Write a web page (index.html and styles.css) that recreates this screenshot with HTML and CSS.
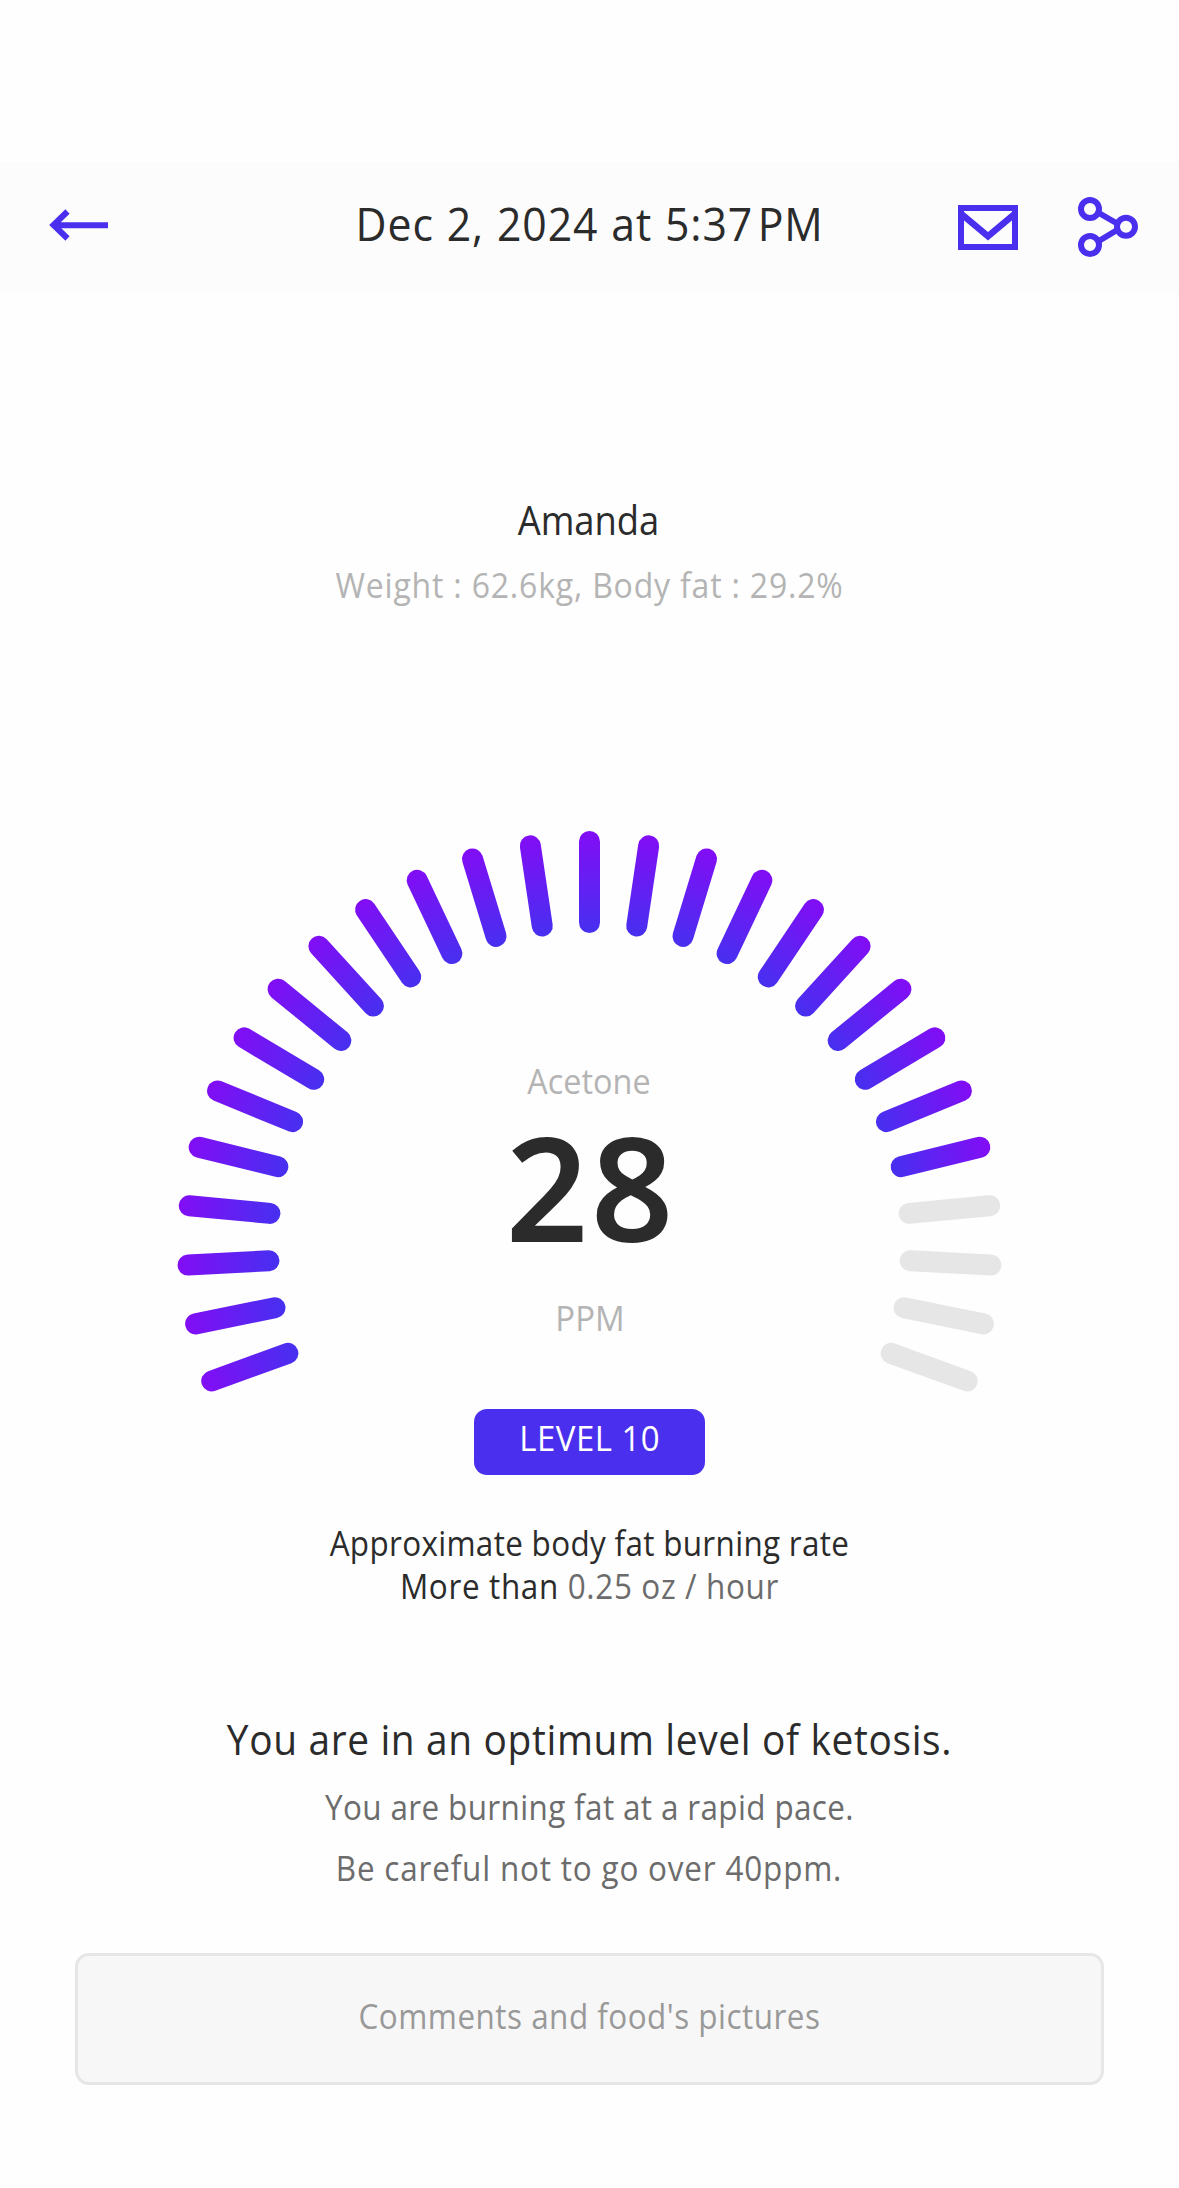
FILE: index.html
```html
<!DOCTYPE html>
<html lang="en">
<head>
<meta charset="utf-8">
<title>Ketone reading</title>
<link rel="stylesheet" href="styles.css">
</head>
<body>
<header class="bar">
  <svg class="icon-back" viewBox="0 0 60 32" aria-label="Back"><path d="M18.500 2.500 4.500 16 18.500 29.500M5 16.300H59"/></svg>
  <h1 class="title">Dec 2, 2024 at 5:37<span class="thin"> </span>PM</h1>
  <div class="actions">
    <svg class="icon-mail" viewBox="0 0 60 45" aria-label="Mail"><path d="M3 3H57V42H3Z"/><path class="flap" d="M4 9.500 30 31.200 56 9.500"/></svg>
    <svg class="icon-share" viewBox="0 0 60 60" aria-label="Share"><circle cx="12" cy="12" r="9"/><circle cx="12" cy="48" r="9"/><circle cx="48" cy="29.700" r="9"/><path d="M20 15.500 40 27M20 44.500 40 32.500"/></svg>
  </div>
</header>
<main class="content">
  <p class="name">Amanda</p>
  <p class="stats">Weight : 62.6kg, Body fat : 29.2%</p>
  <section class="gauge">
    <svg class="dial" viewBox="0 0 840 580">
      <defs>
        <linearGradient id="fill" x1="0" y1="0" x2="0" y2="1"><stop offset="0" stop-color="#820df5"/><stop offset="1" stop-color="#4730f0"/></linearGradient>
        <rect id="tick" x="409" y="11" width="21" height="102" rx="10.500"/>
      </defs>
      <g id="ticks"></g>
    </svg>
    <div class="reading">
      <p class="label">Acetone</p>
      <p class="value">28</p>
      <p class="unit">PPM</p>
    </div>
  </section>
  <div class="badge"><span class="badge-text">LEVEL 10</span></div>
  <div class="rate">
    <p class="rate-title">Approximate body fat burning rate</p>
    <p class="rate-value">More than <span class="muted">0.25 oz / hour</span></p>
  </div>
  <h2 class="headline">You are in an optimum level of ketosis.</h2>
  <div class="advice">
    <p class="pace">You are burning fat at a rapid pace.</p>
    <p class="caution">Be careful not to go over 40ppm.</p>
  </div>
  <div class="comments"><p class="placeholder">Comments and food's pictures</p></div>
</main>
<script src="gauge.js"></script>
</body>
</html>
```
FILE: styles.css
```css
* { box-sizing: border-box; }
body {
  margin: 0;
  padding-top: 162px;
  min-height: 2188px;
  background: #fefefe;
  color: #2b2b2b;
  font: 400 34px/40px "Open Sans", "Noto Sans", sans-serif;
}
p, h1, h2 { margin: 0; font-weight: 400; }
svg { display: block; fill: none; stroke: #4a30ee; stroke-width: 6; }

.bar {
  display: grid;
  grid-template-columns: 1fr auto 1fr;
  height: 131px;
  padding: 0 41px 0 49px;
  background: #fcfcfd;
}
.icon-back { width: 60px; height: 32px; margin-top: 47px; stroke-width: 6; }
.title {
  font-size: 46px;
  line-height: 122px;
  letter-spacing: .95px;
  word-spacing: 1px;
  white-space: nowrap;
  transform: translateX(-4px) scaleX(.93);
}
.thin { word-spacing: -8px; }
.actions { display: flex; justify-content: flex-end; gap: 60px; }
.icon-mail { width: 60px; height: 45px; margin-top: 43px; }
.flap { stroke-width: 6.500; }
.icon-share { width: 60px; height: 60px; margin-top: 35px; }

.content { text-align: center; white-space: nowrap; }
.name {
  margin-top: 197px;
  font-size: 39.5px;
  line-height: 60px;
  transform: translateX(-1px) scaleX(.921);
}
.stats {
  margin-top: 5px;
  line-height: 60px;
  color: #b4b4b4;
  letter-spacing: .87px;
  transform: scaleX(.94);
}

.gauge { display: grid; justify-content: center; margin-top: 205px; }
.dial, .reading { grid-area: 1 / 1; }
.dial { width: 840px; height: 580px; stroke: none; }
.lit { fill: url(#fill); }
.unlit { fill: #e6e6e6; }
.reading { padding-top: 241px; }
.label { color: #b4b4b4; transform: translateX(-1px) scaleX(.953); }
.value {
  margin: 15px -3px 0 0;
  font: 600 144px/140px "Noto Sans", sans-serif;
  letter-spacing: 2.9px;
}
.unit { margin-top: 42px; color: #b4b4b4; transform: scaleX(.97); }

.badge {
  width: 231.5px;
  height: 65.5px;
  margin: 9px auto 0;
  border-radius: 13px;
  background: #4a30ee;
  color: #fff;
}
.badge-text {
  display: block;
  line-height: 58px;
  letter-spacing: .5px;
  transform: scaleX(.97);
}

.rate { margin-top: 47.4px; line-height: 43.3px; }
.rate-title { letter-spacing: .34px; transform: scaleX(.925); }
.rate-value { letter-spacing: .7px; transform: scaleX(.925); }
.muted { color: #6c6c6c; }

.headline {
  margin-top: 100.2px;
  font-size: 42px;
  line-height: 60px;
  letter-spacing: .7px;
  transform: scaleX(.925);
}
.advice { margin-top: 7.9px; line-height: 61.5px; color: #6c6c6c; }
.pace { letter-spacing: .39px; transform: scaleX(.925); }
.caution { letter-spacing: .88px; transform: translateX(-.5px) scaleX(.925); }

.comments {
  height: 132px;
  margin: 53.4px 75px 0;
  border: 3px solid #e6e6e6;
  border-radius: 14px;
  background: #f7f7f7;
  color: #999;
}
.placeholder { line-height: 120px; letter-spacing: .52px; transform: scaleX(.925); }
```
FILE: gauge.js
```js
// 27 ticks spread over a 220 degree arc; the first 23 are lit.
const TICKS = 27, LIT = 23, SWEEP = 220;
const group = document.getElementById('ticks');
for (let i = 0; i < TICKS; i++) {
  const tick = document.createElementNS('http://www.w3.org/2000/svg', 'use');
  const angle = -SWEEP / 2 + i * SWEEP / (TICKS - 1);
  tick.setAttribute('href', '#tick');
  tick.setAttribute('class', i < LIT ? 'lit' : 'unlit');
  tick.setAttribute('transform', `rotate(${angle} 419.5 423.5)`);
  group.appendChild(tick);
}
```
